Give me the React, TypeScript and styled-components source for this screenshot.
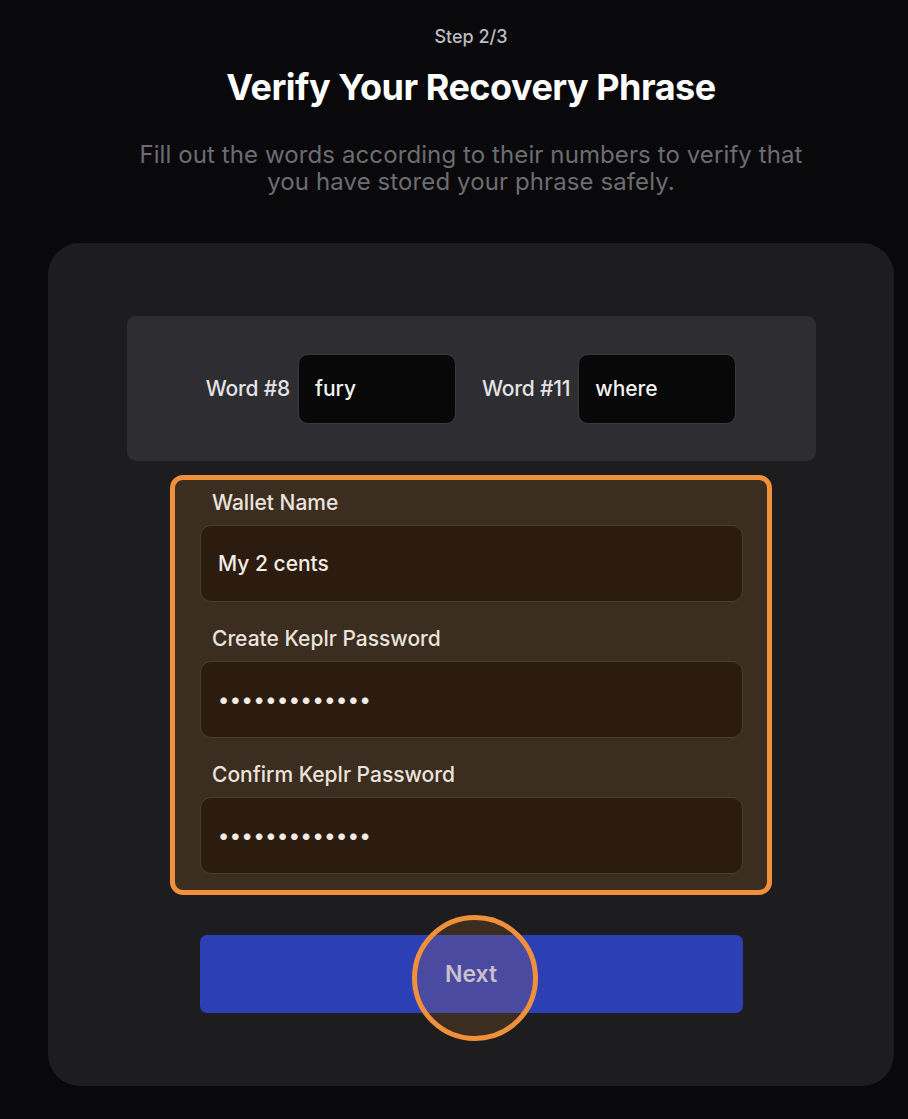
import React from "react";
import styled, { createGlobalStyle } from "styled-components";

const Global = createGlobalStyle`
  html, body { margin: 0; padding: 0; background: #09090b; }
  body { font-family: Inter, "Noto Sans", sans-serif; -webkit-font-smoothing: antialiased; }
  * { box-sizing: border-box; }
`;

const Page = styled.div`
  width: 908px;
  min-height: 1119px;
  padding: 25px 14px 0 48px;
  display: flex;
  flex-direction: column;
  align-items: center;
`;

const Header = styled.header`
  width: 100%;
  display: flex;
  flex-direction: column;
  align-items: center;
  text-align: center;
`;

const StepText = styled.div`
  font-size: 18px;
  line-height: 24px;
  color: #bdbdbf;
  font-weight: 500;
`;

const Title = styled.h1`
  margin: 16px 0 0;
  font-size: 36px;
  line-height: 44px;
  font-weight: 700;
  letter-spacing: -0.5px;
  color: #ffffff;
`;

const Subtitle = styled.p`
  margin: 32px 0 0;
  font-size: 24px;
  line-height: 27px;
  color: #6d6d71;
  font-weight: 400;
  letter-spacing: 0.1px;
`;

const Card = styled.main`
  width: 846px;
  margin-top: 48px;
  background: #1d1d1f;
  border-radius: 32px;
  padding: 73px 0 73px;
  display: flex;
  flex-direction: column;
  align-items: center;
`;

const WordBox = styled.section`
  width: 689px;
  height: 145px;
  background: #2e2e32;
  border-radius: 9px;
  display: flex;
  align-items: center;
  justify-content: center;
  gap: 26px;
`;

const WordGroup = styled.div`
  display: flex;
  align-items: center;
  gap: 8px;
`;

const WordLabel = styled.span`
  font-size: 21px;
  font-weight: 500;
  color: #e4e4e6;
  letter-spacing: -0.2px;
`;

const WordInput = styled.div`
  width: 158px;
  height: 70px;
  background: #080808;
  border: 1px solid #3a3a3e;
  border-radius: 10px;
  display: flex;
  align-items: center;
  padding-left: 16px;
  font-size: 21px;
  font-weight: 500;
  color: #f2f2f2;
`;

const Highlight = styled.section`
  margin-top: 14px;
  width: 602px;
  border: 5px solid #f0903a;
  border-radius: 13px;
  background: rgba(240, 140, 48, 0.15);
  padding: 12px 24px 16px 25px;
  display: flex;
  flex-direction: column;
  gap: 26px;
`;

const Field = styled.div`
  display: flex;
  flex-direction: column;
`;

const FieldLabel = styled.label`
  font-size: 21px;
  line-height: 22px;
  font-weight: 500;
  color: #ebe4dd;
  padding-left: 12px;
  margin-bottom: 11px;
  letter-spacing: 0;
`;

const FieldInput = styled.div<{ $secret?: boolean }>`
  height: 77px;
  background: #2c1c0f;
  border: 1px solid #4c3d31;
  border-radius: 11px;
  display: flex;
  align-items: center;
  padding-left: 17px;
  color: #f4ece4;
  font-size: 21px;
  font-weight: 500;
  letter-spacing: ${(p) => (p.$secret ? "0.6px" : "0")};
`;

const ButtonWrap = styled.div`
  position: relative;
  margin-top: 40px;
  width: 543px;
`;

const NextButton = styled.button`
  width: 100%;
  height: 78px;
  border: none;
  border-radius: 7px;
  background: #2c3fb4;
  color: rgba(255, 255, 255, 0.72);
  font-family: Inter, "Noto Sans", sans-serif;
  font-size: 23px;
  font-weight: 600;
  cursor: pointer;
`;

const Ring = styled.div`
  position: absolute;
  left: 212px;
  top: -20px;
  width: 126px;
  height: 126px;
  border-radius: 50%;
  border: 5px solid #f0903a;
  background: rgba(240, 140, 48, 0.15);
  pointer-events: none;
`;

const dots = "•".repeat(13);

export default function App() {
  return (
    <>
      <Global />
      <Page>
        <Header>
          <StepText>Step 2/3</StepText>
          <Title>Verify Your Recovery Phrase</Title>
          <Subtitle>
            Fill out the words according to their numbers to verify that
            <br />
            you have stored your phrase safely.
          </Subtitle>
        </Header>
        <Card>
          <WordBox>
            <WordGroup>
              <WordLabel>Word #8</WordLabel>
              <WordInput>fury</WordInput>
            </WordGroup>
            <WordGroup>
              <WordLabel>Word #11</WordLabel>
              <WordInput>where</WordInput>
            </WordGroup>
          </WordBox>
          <Highlight>
            <Field>
              <FieldLabel>Wallet Name</FieldLabel>
              <FieldInput>My 2 cents</FieldInput>
            </Field>
            <Field>
              <FieldLabel>Create Keplr Password</FieldLabel>
              <FieldInput $secret>{dots}</FieldInput>
            </Field>
            <Field>
              <FieldLabel>Confirm Keplr Password</FieldLabel>
              <FieldInput $secret>{dots}</FieldInput>
            </Field>
          </Highlight>
          <ButtonWrap>
            <NextButton>Next</NextButton>
            <Ring />
          </ButtonWrap>
        </Card>
      </Page>
    </>
  );
}
